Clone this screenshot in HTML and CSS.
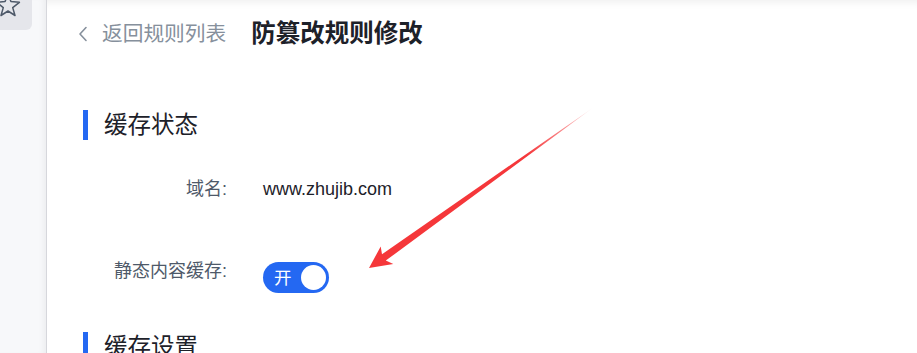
FILE: index.html
```html
<!DOCTYPE html>
<html lang="zh-CN">
<head>
<meta charset="utf-8">
<title>防篡改规则修改</title>
<link rel="stylesheet" href="styles.css">
</head>
<body>
<div class="page">
  <aside class="sidebar">
    <div class="fav-btn">
      <svg width="32" height="30" viewBox="0 0 32 30">
        <polygon points="8,-6 10.9,1.4 19.4,2.3 12.7,7.6 15,15.5 8,11 1,15.5 3.3,7.6 -3.4,2.3 5.1,1.4" fill="none" stroke="#4e5969" stroke-width="1.5" stroke-linejoin="round"/>
      </svg>
    </div>
  </aside>
  <main class="main">
    <header class="header">
      <a class="back">
        <svg class="chev" width="10" height="16" viewBox="0 0 10 16"><path d="M8 1.5 L2 8 L8 14.5" fill="none" stroke="#86909c" stroke-width="1.6" stroke-linecap="round" stroke-linejoin="round"/></svg>
        <span class="back-text">返回规则列表</span>
      </a>
      <h1 class="title">防篡改规则修改</h1>
    </header>

    <section class="section">
      <h2 class="sec-title">缓存状态</h2>
      <div class="row row-domain">
        <div class="label">域名:</div>
        <div class="value">www.zhujib.com</div>
      </div>
      <div class="row row-switch">
        <div class="label">静态内容缓存:</div>
        <div class="switch"><span class="switch-text">开</span><span class="knob"></span></div>
      </div>
    </section>

    <section class="section section-2">
      <h2 class="sec-title">缓存设置</h2>
    </section>
  </main>
</div>
<svg class="arrow" width="917" height="353" viewBox="0 0 917 353">
  <defs>
    <linearGradient id="ag" gradientUnits="userSpaceOnUse" x1="594" y1="107" x2="369" y2="268">
      <stop offset="0" stop-color="#f5373a" stop-opacity="0"/>
      <stop offset="0.12" stop-color="#f5373a" stop-opacity="0.55"/>
      <stop offset="0.3" stop-color="#f5373a" stop-opacity="1"/>
      <stop offset="1" stop-color="#f5373a" stop-opacity="1"/>
    </linearGradient>
  </defs>
  <polygon points="369,268 380.7,246.5 382,254.3 594,107 385.8,260.6 393.3,264" fill="url(#ag)"/>
</svg>
</body>
</html>
```
FILE: styles.css
```css
html, body {
  margin: 0;
  padding: 0;
  background: #ffffff;
}
body {
  width: 917px;
  height: 353px;
  overflow: hidden;
  position: relative;
  font-family: "Liberation Sans", "Noto Sans CJK SC", sans-serif;
}
.page {
  display: flex;
  height: 353px;
}
.sidebar {
  width: 46px;
  flex: 0 0 46px;
  background: #f7f8fa;
  border-right: 1px solid #d6d7dc;
  box-shadow: inset -6px 0 6px -4px rgba(0, 0, 0, 0.05);
}
.fav-btn {
  width: 32px;
  height: 30px;
  background: #e5e6eb;
  border-bottom-right-radius: 6px;
  overflow: hidden;
}
.fav-btn svg {
  display: block;
}
.main {
  flex: 1;
  box-shadow: inset 0 9px 8px -7px rgba(0, 0, 0, 0.07);
  padding-left: 31px;
}
.header {
  display: flex;
  align-items: center;
  height: 28px;
  padding-top: 20px;
  padding-bottom: 20px;
}
.back {
  display: flex;
  align-items: center;
  color: #86909c;
}
.chev {
  display: block;
  margin-right: 14px;
}
.back-text {
  font-size: 20.7px;
  line-height: 28px;
}
.title {
  margin: 0 0 0 25px;
  font-size: 24.5px;
  line-height: 28px;
  font-weight: 600;
  color: #1d2129;
}
.section {
  margin-top: 42px;
  margin-left: 5px;
}
.sec-title {
  margin: 0;
  height: 30px;
  line-height: 30px;
  font-size: 23.5px;
  font-weight: 400;
  color: #1d2129;
  border-left: 5px solid #2468f2;
  padding-left: 16px;
}
.row {
  display: flex;
  align-items: flex-start;
  font-size: 18px;
  line-height: 24px;
}
.row-domain {
  margin-top: 37px;
}
.row-switch {
  margin-top: 58px;
}
.label {
  width: 144px;
  text-align: right;
  color: #4e5969;
}
.value {
  margin-left: 36px;
  color: #1d2129;
}
.switch {
  margin-left: 36px;
  margin-top: 3px;
  width: 66px;
  height: 31px;
  border-radius: 16px;
  background: #2468f2;
  display: flex;
  align-items: center;
  justify-content: space-between;
  padding: 0 3px 0 11px;
  box-sizing: border-box;
}
.switch-text {
  color: #ffffff;
  font-size: 17.5px;
  line-height: 24px;
}
.knob {
  width: 25px;
  height: 25px;
  border-radius: 50%;
  background: #ffffff;
}
.section-2 {
  margin-top: 39px;
}
.arrow {
  position: absolute;
  left: 0;
  top: 0;
  pointer-events: none;
}
```
